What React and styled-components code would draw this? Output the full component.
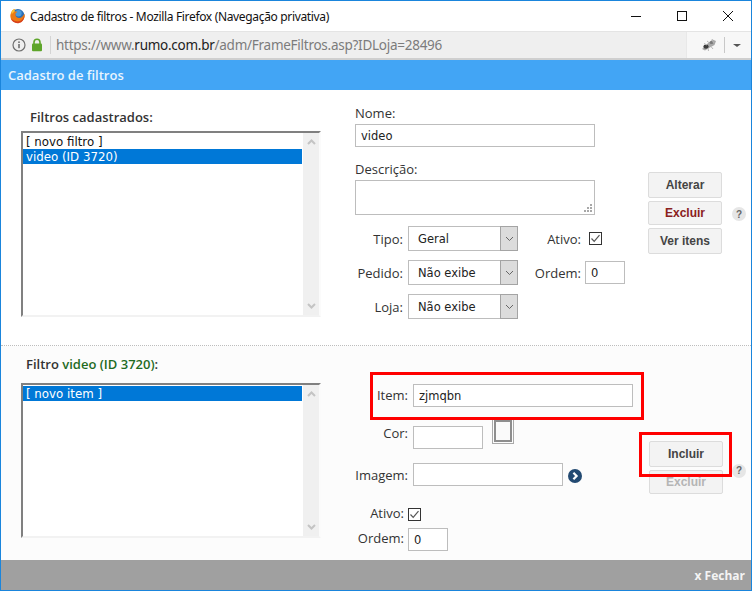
import React from 'react';
import styled, { createGlobalStyle } from 'styled-components';

const GlobalStyle = createGlobalStyle`
  html, body {
    margin: 0;
    padding: 0;
    background: #fff;
  }
  * {
    box-sizing: border-box;
  }
`;

const uiFont = `"Open Sans", "Noto Sans", sans-serif`;
const fieldFont = `"DejaVu Sans", Verdana, sans-serif`;

const Frame = styled.div`
  width: 752px;
  height: 591px;
  display: flex;
  flex-direction: column;
  border: 1px solid #1a85dc;
  background: #fff;
  font-family: ${uiFont};
  color: #333;
  overflow: hidden;
`;

const TitleBar = styled.div`
  height: 30px;
  flex: none;
  display: flex;
  align-items: center;
  padding-left: 9px;
  font-family: "Noto Sans", "Open Sans", sans-serif;
  font-size: 12px;
  letter-spacing: -0.34px;
  color: #111;
`;

const TitleText = styled.span`
  margin-left: 5px;
  flex: 1;
`;

const WinButton = styled.span`
  width: 46px;
  height: 30px;
  display: flex;
  align-items: center;
  justify-content: center;
`;

const AddressBar = styled.div`
  height: 29px;
  flex: none;
  display: flex;
  border-top: 1px solid #e4e4e4;
  border-bottom: 2px solid #cfcfcf;
  background: #f7f7f7;
`;

const UrlBox = styled.div`
  width: 686px;
  display: flex;
  align-items: center;
  padding-left: 11px;
  background: #efefef;
  border-right: 1px solid #e8e8e8;
`;

const LockSvg = styled.svg`
  margin-left: 5px;
`;

const UrlDivider = styled.span`
  width: 1px;
  height: 18px;
  margin: 0 5px 0 7px;
  background: #d4d4d4;
`;

const UrlText = styled.span`
  font-family: "Noto Sans", "Open Sans", sans-serif;
  font-size: 13.5px;
  letter-spacing: -0.26px;
  color: #7c7c7c;
  white-space: nowrap;
`;

const UrlHost = styled.span`
  color: #222;
`;

const AddonArea = styled.div`
  flex: 1;
  display: flex;
  align-items: center;
  padding-left: 14px;
`;

const AddonDivider = styled.span`
  width: 1px;
  height: 16px;
  margin: 0 7px;
  background: #c8c8c8;
`;

const Caret = styled.span`
  width: 0;
  height: 0;
  border-left: 4px solid transparent;
  border-right: 4px solid transparent;
  border-top: 3px solid #555;
  margin-left: 1px;
`;

const Header = styled.div`
  height: 30px;
  flex: none;
  display: flex;
  align-items: center;
  padding-left: 7px;
  background: #42a5f5;
  color: #e8f4fe;
  font-size: 13px;
  font-weight: 600;
`;

const Section = styled.section`
  display: flex;
  flex: none;
  height: ${(p) => p.$height}px;
  background: ${(p) => p.$bg || '#fff'};
  border-bottom: ${(p) => (p.$divider ? '1px dotted #bdbdbd' : 'none')};
`;

const ListColumn = styled.div`
  width: 354px;
  flex: none;
  padding: ${(p) => p.$top}px 0 0 20px;
`;

const ListTitle = styled.div`
  height: 18px;
  line-height: 18px;
  margin-left: ${(p) => p.$indent}px;
  margin-bottom: ${(p) => p.$gap}px;
  font-size: 13px;
  font-weight: 600;
  color: #333;
`;

const Accent = styled.span`
  color: #1f6b1f;
`;

const ListBox = styled.div`
  position: relative;
  width: 300px;
  height: ${(p) => p.$height}px;
  display: flex;
  border-top: 2px solid #808080;
  border-left: 2px solid #808080;
  border-right: 2px solid #fbfbfb;
  border-bottom: 2px solid #f2f2f2;
  background: #fff;
`;

const ListRows = styled.div`
  flex: 1;
  padding-top: 1px;
`;

const ListRow = styled.div`
  height: 15px;
  line-height: 16px;
  padding-left: 3px;
  margin-right: 1px;
  font-family: ${fieldFont};
  font-size: 11.8px;
  color: ${(p) => (p.$selected ? '#fff' : '#111')};
  background: ${(p) => (p.$selected ? '#0078d7' : 'transparent')};
`;

const ScrollTrack = styled.div`
  width: 16px;
  display: flex;
  flex-direction: column;
  justify-content: space-between;
  align-items: center;
  padding: 6px 0;
  background: #f0f0f0;
`;

const FormColumn = styled.div`
  width: 293px;
  flex: none;
  padding-top: 14px;
`;

const FieldLabel = styled.div`
  height: 18px;
  line-height: 18px;
  margin: ${(p) => p.$top || 0}px 0 ${(p) => p.$bottom || 0}px;
  font-size: 13px;
  color: #333;
`;

const TextInput = styled.input`
  display: block;
  width: ${(p) => p.$width}px;
  height: 23px;
  padding: 0 5px;
  border: 1px solid #bdbdbd;
  outline: none;
  background: #fff;
  font-family: ${fieldFont};
  font-size: 11.5px;
  color: #222;
`;

const AreaWrap = styled.div`
  position: relative;
  width: 240px;
  height: 35px;
`;

const TextArea = styled.textarea`
  display: block;
  width: 100%;
  height: 100%;
  border: 1px solid #bdbdbd;
  outline: none;
  resize: none;
  background: #fff;
`;

const ResizeGrip = styled.svg`
  position: absolute;
  right: 2px;
  bottom: 2px;
`;

const ChoiceGrid = styled.div`
  display: grid;
  grid-template-columns: 48px 115px 63px auto;
  grid-auto-rows: 25px;
  row-gap: 9px;
  align-items: center;
  margin-top: 11px;
`;

const RightLabel = styled.div`
  padding-top: 1px;
  font-size: 13px;
  color: #333;
  text-align: right;
`;

const ControlCell = styled.div`
  padding-left: ${(p) => p.$indent || 0}px;
  display: flex;
  align-items: center;
`;

const SelectBox = styled.div`
  margin-left: 5px;
  width: 110px;
  height: 25px;
  display: flex;
  border: 1px solid #bdbdbd;
  font-family: ${fieldFont};
  font-size: 11.5px;
  color: #222;
`;

const SelectValue = styled.span`
  flex: 1;
  line-height: 24px;
  padding-left: 9px;
`;

const SelectArrow = styled.span`
  width: 18px;
  margin: -1px -1px -1px 0;
  display: flex;
  align-items: center;
  justify-content: center;
  border: 1px solid #a4a4a4;
  background: #dcdcdc;
`;

const CheckBox = styled.span`
  width: 13px;
  height: 13px;
  display: flex;
  align-items: center;
  justify-content: center;
  border: 1px solid #333;
  background: #fff;
`;

const ActionRow = styled.div`
  display: flex;
  align-items: center;
  align-self: flex-start;
  margin-top: ${(p) => p.$top}px;
`;

const ActionStack = styled.div`
  width: 74px;
  display: flex;
  flex-direction: column;
  gap: 3px;
`;

const ActionButton = styled.button`
  position: relative;
  height: ${(p) => p.$height}px;
  padding: 0;
  border: 1px solid #dcdcdc;
  border-radius: 2px;
  background: #f3f3f3;
  font-family: "Liberation Sans", Arial, sans-serif;
  font-size: 12px;
  font-weight: 700;
  color: ${(p) => p.$color || '#444'};
`;

const HelpMark = styled.span`
  width: 14px;
  height: 14px;
  margin: ${(p) => p.$offset}px 0 0 ${(p) => p.$gap}px;
  display: flex;
  align-items: center;
  justify-content: center;
  border-radius: 50%;
  background: #e6e6e6;
  font-family: "Liberation Sans", Arial, sans-serif;
  font-size: 10px;
  font-weight: 700;
  color: #666;
`;

const ItemForm = styled.div`
  width: 294px;
  flex: none;
  padding-top: 38px;
`;

const ItemRow = styled.div`
  position: relative;
  display: flex;
  align-items: flex-start;
  margin-top: ${(p) => p.$top || 0}px;
`;

const ItemLabel = styled.span`
  width: 53px;
  margin: ${(p) => p.$shift || 0}px 5px 0 0;
  line-height: 23px;
  font-size: 13px;
  color: #333;
  text-align: right;
`;

const ShortLabel = styled(ItemLabel)`
  width: 49px;
  margin-right: 4px;
`;

const RedMark = styled.span`
  position: absolute;
  top: ${(p) => p.$top}px;
  right: ${(p) => p.$right}px;
  bottom: ${(p) => p.$bottom}px;
  left: ${(p) => p.$left}px;
  border: 3px solid #f00;
  z-index: 2;
  pointer-events: none;
`;

const ColorSwatch = styled.span`
  width: 22px;
  height: 26px;
  margin: -8px 0 0 9px;
  padding: 1px;
  border: 1px solid #aaa;
  background: #fcfcfc;
`;

const SwatchFill = styled.span`
  display: block;
  height: 100%;
  border: 2px solid #8e8e8e;
  background: #fafafa;
`;

const GoIcon = styled.svg`
  margin: 6px 0 0 5px;
`;

const ActiveRow = styled.div`
  display: flex;
  align-items: center;
  height: 18px;
  margin-top: 18px;
`;

const Footer = styled.div`
  flex: 1;
  display: flex;
  align-items: center;
  justify-content: flex-end;
  padding-right: 6px;
  background: #a0a0a0;
  color: #f4f4f4;
  font-size: 12px;
  font-weight: 700;
`;

const Chevron = ({ up, color = '#c4c4c4' }) => (
  <svg width="9" height="6" viewBox="0 0 9 6" fill="none">
    <path d={up ? 'M1 5L4.5 1.5L8 5' : 'M1 1L4.5 4.5L8 1'} stroke={color} strokeWidth="2" />
  </svg>
);

const SelectField = ({ value }) => (
  <SelectBox>
    <SelectValue>{value}</SelectValue>
    <SelectArrow>
      <svg width="9" height="6" viewBox="0 0 9 6" fill="none">
        <path d="M1 1L4.5 4.5L8 1" stroke="#666" strokeWidth="1" />
      </svg>
    </SelectArrow>
  </SelectBox>
);

const Check = () => (
  <CheckBox>
    <svg width="11" height="11" viewBox="0 0 11 11" fill="none">
      <path d="M1.5 5.5L4.2 8.4L9.5 2.2" stroke="#555" strokeWidth="1.2" />
    </svg>
  </CheckBox>
);

const FirefoxLogo = () => (
  <svg width="15" height="16" viewBox="0 0 16 16">
    <circle cx="8.4" cy="7.6" r="7" fill="#2d6fb5" />
    <circle cx="9" cy="5" r="3.4" fill="#4a9bdc" />
    <path d="M1.8 3.2C2.6 1.8 4 .8 5.6.6 4.8 1.6 4.6 2.6 5 3.4 5.8 3 7 3 7.8 3.6 6.6 4.2 5.8 5.2 5.8 6.4c0 2.4 2 4 4.2 3.8 2-.2 3.6-1.6 4.6-3.6.6-.4.8-.6 1-1 .6 3-.4 6-2.8 8-2.6 2-6.4 2.2-9.2.2C1 12 -.2 9.2.6 6.2.8 5.2 1.2 4.2 1.8 3.2Z" fill="#ec7a14" />
    <path d="M3.4 12.2C6 14.4 10.4 14.2 12.8 12 14 10.8 14.8 9.4 15.2 8c.2 2.2-.8 4.6-2.6 6-2.6 2-6.4 2.2-9.2.2C2.2 13.2 1.2 11.8.8 10.4 1.4 11.2 2.4 11.6 3.4 12.2Z" fill="#d8401a" />
    <path d="M1.8 3.2C2.6 1.8 4 .8 5.6.6 4.8 1.6 4.6 2.6 5 3.4 3.6 3.8 2.6 5 2 6.4 1.6 5.4 1.6 4.2 1.8 3.2Z" fill="#fbc02d" />
  </svg>
);

const InfoIcon = () => (
  <svg width="14" height="14" viewBox="0 0 14 14" fill="none">
    <circle cx="7" cy="7" r="6" stroke="#707070" strokeWidth="1.2" />
    <rect x="6.2" y="6" width="1.6" height="4.2" fill="#707070" />
    <rect x="6.2" y="3.4" width="1.6" height="1.6" fill="#707070" />
  </svg>
);

const LockIcon = () => (
  <LockSvg width="12" height="14" viewBox="0 0 12 14">
    <path d="M3 6V4.2C3 2.4 4.3 1.2 6 1.2S9 2.4 9 4.2V6" fill="none" stroke="#5ea52a" strokeWidth="1.6" />
    <rect x="1" y="5.6" width="10" height="7.6" rx="1" fill="#5ea52a" />
  </LockSvg>
);

const BugIcon = () => (
  <svg width="16" height="14" viewBox="0 0 16 14">
    <path d="M1 11L6 6L11.5 1.5L15 3L13.5 7L8 10L4 12.5Z" fill="#a8a8a8" />
    <ellipse cx="5" cy="8.6" rx="2.6" ry="2.2" fill="#3c3c3c" />
    <ellipse cx="10.5" cy="4.5" rx="2" ry="1.6" fill="#7a7a7a" />
    <path d="M6 3L8.5 5M3 5.5L6 7M10 8.5L12 11M7 10L7.5 13M11 1L12.5 5" stroke="#b8b8b8" strokeWidth="1" />
  </svg>
);

const App = () => (
  <Frame>
    <GlobalStyle />
    <TitleBar>
      <FirefoxLogo />
      <TitleText>Cadastro de filtros - Mozilla Firefox (Navegação privativa)</TitleText>
      <WinButton>
        <svg width="10" height="10" viewBox="0 0 10 10"><rect y="5" width="10" height="1" fill="#111" /></svg>
      </WinButton>
      <WinButton>
        <svg width="10" height="10" viewBox="0 0 10 10" fill="none"><rect x=".5" y=".5" width="9" height="9" stroke="#111" /></svg>
      </WinButton>
      <WinButton>
        <svg width="10" height="10" viewBox="0 0 10 10" fill="none"><path d="M0 0L10 10M10 0L0 10" stroke="#111" /></svg>
      </WinButton>
    </TitleBar>

    <AddressBar>
      <UrlBox>
        <InfoIcon />
        <LockIcon />
        <UrlDivider />
        <UrlText>https://www.<UrlHost>rumo.com.br</UrlHost>/adm/FrameFiltros.asp?IDLoja=28496</UrlText>
      </UrlBox>
      <AddonArea>
        <BugIcon />
        <AddonDivider />
        <Caret />
      </AddonArea>
    </AddressBar>

    <Header>Cadastro de filtros</Header>

    <Section $height={256} $divider>
      <ListColumn $top={18}>
        <ListTitle $indent={9} $gap={5}>Filtros cadastrados:</ListTitle>
        <ListBox $height={186}>
          <ListRows>
            <ListRow>[ novo filtro ]</ListRow>
            <ListRow $selected>video (ID 3720)</ListRow>
          </ListRows>
          <ScrollTrack>
            <Chevron up />
            <Chevron />
          </ScrollTrack>
        </ListBox>
      </ListColumn>

      <FormColumn>
        <FieldLabel $bottom={2}>Nome:</FieldLabel>
        <TextInput $width={240} value="video" readOnly />
        <FieldLabel $top={13} $bottom={2}>Descrição:</FieldLabel>
        <AreaWrap>
          <TextArea readOnly />
          <ResizeGrip width="9" height="9" viewBox="0 0 9 9" fill="#a8a8a8">
            <rect x="6" y="0" width="2" height="2" />
            <rect x="3" y="3" width="2" height="2" />
            <rect x="6" y="3" width="2" height="2" />
            <rect x="0" y="6" width="2" height="2" />
            <rect x="3" y="6" width="2" height="2" />
            <rect x="6" y="6" width="2" height="2" />
          </ResizeGrip>
        </AreaWrap>
        <ChoiceGrid>
          <RightLabel>Tipo:</RightLabel>
          <SelectField value="Geral" />
          <RightLabel>Ativo:</RightLabel>
          <ControlCell $indent={8}><Check /></ControlCell>
          <RightLabel>Pedido:</RightLabel>
          <SelectField value="Não exibe" />
          <RightLabel>Ordem:</RightLabel>
          <ControlCell $indent={4}><TextInput $width={40} value="0" readOnly /></ControlCell>
          <RightLabel>Loja:</RightLabel>
          <SelectField value="Não exibe" />
        </ChoiceGrid>
      </FormColumn>

      <ActionRow $top={82}>
        <ActionStack>
          <ActionButton $height={26}>Alterar</ActionButton>
          <ActionButton $height={24} $color="#8a2020">Excluir</ActionButton>
          <ActionButton $height={26}>Ver itens</ActionButton>
        </ActionStack>
        <HelpMark $offset={2} $gap={10}>?</HelpMark>
      </ActionRow>
    </Section>

    <Section $height={214} $bg="#fcfcfc">
      <ListColumn $top={9}>
        <ListTitle $indent={5} $gap={10}>Filtro <Accent>video (ID 3720)</Accent>:</ListTitle>
        <ListBox $height={155}>
          <ListRows>
            <ListRow $selected>[ novo item ]</ListRow>
          </ListRows>
          <ScrollTrack>
            <Chevron up />
            <Chevron />
          </ScrollTrack>
        </ListBox>
      </ListColumn>

      <ItemForm>
        <ItemRow>
          <ItemLabel>Item:</ItemLabel>
          <TextInput $width={220} value="zjmqbn" readOnly />
          <RedMark $top={-12} $bottom={-13} $left={15} $right={5} />
        </ItemRow>
        <ItemRow $top={19}>
          <ItemLabel $shift={-4}>Cor:</ItemLabel>
          <TextInput $width={70} readOnly />
          <ColorSwatch><SwatchFill /></ColorSwatch>
        </ItemRow>
        <ItemRow $top={14}>
          <ItemLabel $shift={1}>Imagem:</ItemLabel>
          <TextInput $width={150} readOnly />
          <GoIcon width="14" height="14" viewBox="0 0 14 14">
            <circle cx="7" cy="7" r="7" fill="#234a72" />
            <path d="M5.4 3.8L8.6 7L5.4 10.2" fill="none" stroke="#fff" strokeWidth="2.2" />
          </GoIcon>
        </ItemRow>
        <ActiveRow>
          <ShortLabel $shift={-1}>Ativo:</ShortLabel>
          <Check />
        </ActiveRow>
        <ItemRow $top={5}>
          <ShortLabel $shift={-1}>Ordem:</ShortLabel>
          <TextInput $width={40} value="0" readOnly />
        </ItemRow>
      </ItemForm>

      <ActionRow $top={95}>
        <ActionStack>
          <ActionButton $height={26}>
            Incluir
            <RedMark $top={-10} $bottom={-11} $left={-11} $right={-10} />
          </ActionButton>
          <ActionButton $height={24} $color="#b5b5b5">Excluir</ActionButton>
        </ActionStack>
        <HelpMark $offset={6} $gap={9}>?</HelpMark>
      </ActionRow>
    </Section>

    <Footer>x Fechar</Footer>
  </Frame>
);

export default App;
